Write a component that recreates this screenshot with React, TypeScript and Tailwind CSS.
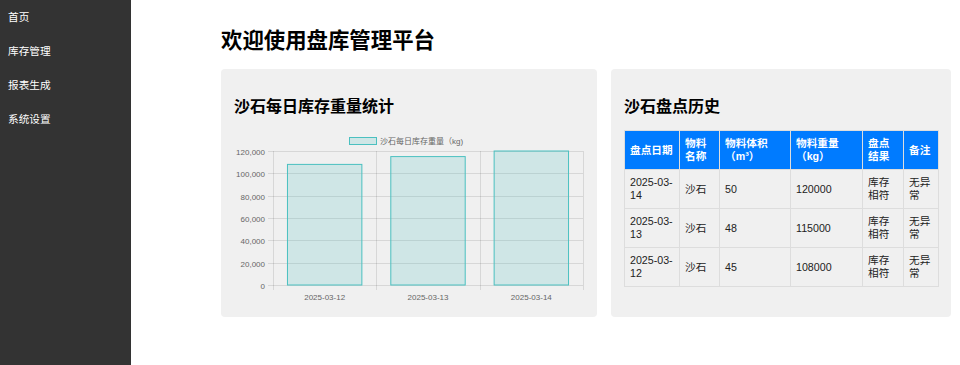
import React from 'react'

const navItems = ['首页', '库存管理', '报表生成', '系统设置']

const records = [
  { date: '2025-03-14', name: '沙石', volume: 50, weight: 120000 },
  { date: '2025-03-13', name: '沙石', volume: 48, weight: 115000 },
  { date: '2025-03-12', name: '沙石', volume: 45, weight: 108000 },
]

const font = '"Liberation Sans", "Noto Sans CJK SC", sans-serif'

function WeightChart() {
  const data = [...records].reverse()
  const left = 39
  const right = 349
  const top = 22
  const bottom = 156
  const max = 120000
  const colW = (right - left) / data.length
  const barW = colW * 0.72
  const ticks = [0, 20000, 40000, 60000, 80000, 100000, 120000]
  const yOf = (v: number) => bottom - (v / max) * (bottom - top)

  return (
    <svg width={350} height={175} viewBox="0 0 350 175" style={{ fontFamily: font }}>
      {/* legend */}
      <rect x={115.5} y={8.5} width={27} height={7} fill="rgba(75,192,192,0.2)" stroke="rgb(75,192,192)" strokeWidth={1} />
      <text x={146} y={14.5} fontSize={8} fill="#666">沙石每日库存重量（kg)</text>

      {/* horizontal grid + y labels */}
      {ticks.map((t) => {
        const y = Math.round(yOf(t)) + 0.5
        return (
          <g key={t}>
            <line x1={left - 5} x2={right} y1={y} y2={y} stroke="rgba(0,0,0,0.1)" strokeWidth={1} />
            <text x={31} y={y + 3} fontSize={8} fill="#666" textAnchor="end">
              {t.toLocaleString('en-US')}
            </text>
          </g>
        )
      })}

      {/* vertical grid */}
      {[0, 1, 2, 3].map((i) => {
        const x = Math.round(left + i * colW) + 0.5
        return <line key={i} x1={x} x2={x} y1={top} y2={bottom + 5} stroke="rgba(0,0,0,0.1)" strokeWidth={1} />
      })}

      {/* bars */}
      {data.map((d, i) => {
        const x = left + i * colW + (colW - barW) / 2
        const y = yOf(d.weight)
        return (
          <g key={d.date}>
            <rect x={x} y={y} width={barW} height={bottom - y} fill="rgba(75,192,192,0.2)" stroke="rgb(75,192,192)" strokeWidth={1} />
            <text x={left + i * colW + colW / 2} y={171} fontSize={8} fill="#666" textAnchor="middle">
              {d.date}
            </text>
          </g>
        )
      })}
    </svg>
  )
}

function HistoryTable() {
  const th = 'border border-[#ddd] px-[5px] py-[6px] text-left font-bold align-middle'
  const td = 'border border-[#ddd] px-[5px] py-[6px] text-left align-middle'
  return (
    <table className="w-[314px] table-fixed border-collapse text-[10.67px] leading-[13px]">
      <colgroup>
        <col className="w-[55px]" />
        <col className="w-[40px]" />
        <col className="w-[71px]" />
        <col className="w-[72px]" />
        <col className="w-[41px]" />
        <col className="w-[35px]" />
      </colgroup>
      <thead>
        <tr className="bg-[#007bff] text-white h-[39px]">
          <th className={th}>盘点日期</th>
          <th className={th}>物料名称</th>
          <th className={th}>物料体积（m³）</th>
          <th className={th}>物料重量（kg）</th>
          <th className={th}>盘点结果</th>
          <th className={th}>备注</th>
        </tr>
      </thead>
      <tbody className="text-[#222]">
        {records.map((r) => (
          <tr key={r.date} className="h-[39px]">
            <td className={td}>{r.date}</td>
            <td className={td}>{r.name}</td>
            <td className={td}>{r.volume}</td>
            <td className={td}>{r.weight}</td>
            <td className={td}>库存相符</td>
            <td className={td}>无异常</td>
          </tr>
        ))}
      </tbody>
    </table>
  )
}

export default function App() {
  return (
    <div className="flex h-[365px] w-[960px] bg-white" style={{ fontFamily: font }}>
      <aside className="w-[131px] shrink-0 bg-[#333] text-white text-[10.67px]">
        {navItems.map((item) => (
          <div key={item} className="flex h-[34px] items-center px-[8px]">
            {item}
          </div>
        ))}
      </aside>

      <main className="flex-1 pl-[90px] pr-[9px] pt-[28px]">
        <h1 className="text-[21.4px] font-bold leading-[26px] text-black">欢迎使用盘库管理平台</h1>

        <div className="mt-[15px] grid grid-cols-[376px_340px] gap-[14px]">
          <section className="rounded-[4px] bg-[#f0f0f0] p-[13px]">
            <h2 className="mt-[15px] mb-[12px] text-[16px] font-bold leading-[20px] text-black">沙石每日库存重量统计</h2>
            <WeightChart />
          </section>

          <section className="rounded-[4px] bg-[#f0f0f0] p-[13px]">
            <h2 className="mt-[15px] mb-[13px] text-[16px] font-bold leading-[20px] text-black">沙石盘点历史</h2>
            <HistoryTable />
          </section>
        </div>
      </main>
    </div>
  )
}
